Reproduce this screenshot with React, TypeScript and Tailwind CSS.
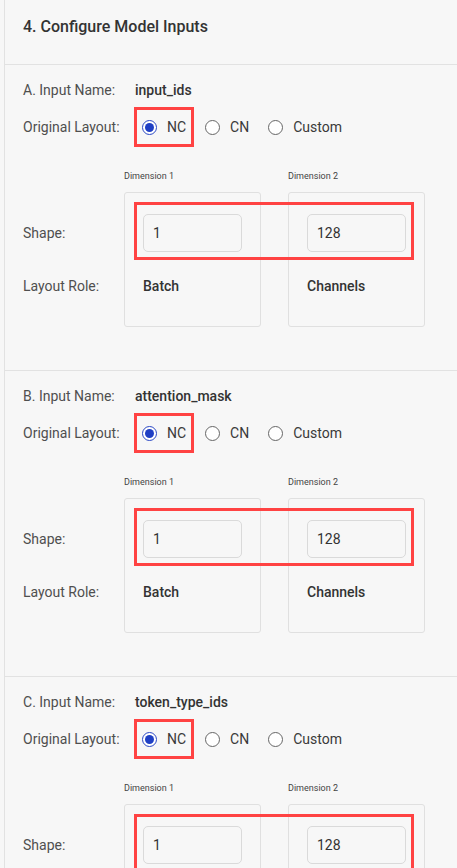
import React from "react";

type InputSpec = {
  letter: string;
  name: string;
  dims: { label: string; value: string; role: string }[];
};

const inputs: InputSpec[] = [
  {
    letter: "A",
    name: "input_ids",
    dims: [
      { label: "Dimension 1", value: "1", role: "Batch" },
      { label: "Dimension 2", value: "128", role: "Channels" },
    ],
  },
  {
    letter: "B",
    name: "attention_mask",
    dims: [
      { label: "Dimension 1", value: "1", role: "Batch" },
      { label: "Dimension 2", value: "128", role: "Channels" },
    ],
  },
  {
    letter: "C",
    name: "token_type_ids",
    dims: [
      { label: "Dimension 1", value: "1", role: "Batch" },
      { label: "Dimension 2", value: "128", role: "Channels" },
    ],
  },
];

function Radio({ checked, label }: { checked?: boolean; label: string }) {
  return (
    <label className="flex items-center gap-[10px]">
      <span
        className={
          checked
            ? "w-[15px] h-[15px] rounded-full border border-[#2a47c4] flex items-center justify-center bg-white"
            : "w-[15px] h-[15px] rounded-full border border-[#666] bg-white"
        }
      >
        {checked && <span className="w-[9px] h-[9px] rounded-full bg-[#1f3fc4]" />}
      </span>
      <span className="text-[14px] text-[#3a3a3a] leading-[20px]">{label}</span>
    </label>
  );
}

function InputSection({ spec }: { spec: InputSpec }) {
  return (
    <section className="border-b border-[#e2e2e2] pl-[18px] pt-[15px] pb-[43px]">
      <div className="flex items-center h-[20px]">
        <span className="w-[112px] text-[14px] text-[#4f4f4f]">
          {spec.letter}. Input Name:
        </span>
        <span className="text-[14px] font-medium text-[#333]">{spec.name}</span>
      </div>

      <div className="flex items-center mt-[7px] h-[40px]">
        <span className="w-[111px] text-[14px] text-[#4f4f4f]">Original Layout:</span>
        <div className="flex items-center">
          <div className="h-[40px] flex items-center px-[5px] border-[3px] border-[#ff4343]">
            <Radio checked label="NC" />
          </div>
          <div className="ml-[11px]">
            <Radio label="CN" />
          </div>
          <div className="ml-[19px]">
            <Radio label="Custom" />
          </div>
        </div>
      </div>

      <div className="flex mt-[23px]">
        <div className="w-[101px] pt-[22px] text-[14px] text-[#4f4f4f]">
          <div className="h-[38px] mt-[22px] flex items-center">Shape:</div>
          <div className="mt-[24px] leading-[20px]">Layout Role:</div>
        </div>

        <div className="relative flex gap-[27px]">
          {spec.dims.map((d) => (
            <div key={d.label} className="flex flex-col">
              <div className="text-[9px] leading-[12px] h-[12px] text-[#444]">{d.label}</div>
              <div className="mt-[10px] w-[137px] h-[135px] border border-[#e0e0e0] rounded-[3px] pt-[21px] px-[18px]">
                <div className="w-[99px] h-[38px] border border-[#dadada] rounded-[5px] pl-[9px] flex items-center text-[14px] text-[#333]">
                  {d.value}
                </div>
                <div className="mt-[24px] text-[14px] leading-[20px] font-medium text-[#333]">
                  {d.role}
                </div>
              </div>
            </div>
          ))}
          <div className="absolute left-[10px] top-[32px] w-[280px] h-[58px] border-[3px] border-[#ff4343] pointer-events-none" />
        </div>
      </div>
    </section>
  );
}

export default function App() {
  return (
    <div
      className="min-h-screen bg-[#f7f7f7] pl-[4px]"
      style={{ fontFamily: "Roboto, 'Noto Sans', sans-serif" }}
    >
      <div className="border-l border-[#e2e2e2] min-h-screen">
        <header className="h-[65px] border-b border-[#e2e2e2] pl-[18px] pt-[15px]">
          <h2 className="text-[16px] leading-[24px] font-medium text-[#333]">
            4. Configure Model Inputs
          </h2>
        </header>
        {inputs.map((s) => (
          <InputSection key={s.letter} spec={s} />
        ))}
      </div>
    </div>
  );
}
